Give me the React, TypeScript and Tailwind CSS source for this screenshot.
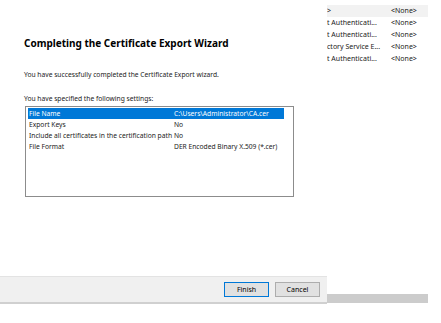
const rows = [
  ["File Name", "C:\\Users\\Administrator\\CA.cer"],
  ["Export Keys", "No"],
  ["Include all certificates in the certification path", "No"],
  ["File Format", "DER Encoded Binary X.509 (*.cer)"],
];

const sideRows = [
  ">",
  "t Authenticati...",
  "t Authenticati...",
  "ctory Service E...",
  "t Authenticati...",
];

export default function App() {
  return (
    <div
      className="relative w-[441px] h-[323px] overflow-hidden bg-white text-[#1a1a1a]"
      style={{ fontFamily: '"Noto Sans", "Open Sans", sans-serif' }}
    >
      {/* bottom of a text line cut off by the window edge */}
      <div className="absolute left-0 top-[-12px] w-[441px] text-[10px] text-black leading-[11px] flex">
        <span className="ml-[2px]">Ej ygpj yj yj ygpj ygqj</span>
        <span className="ml-[200px]">[Ij]pj ygj</span>
      </div>

      <div className="flex">
        {/* wizard panel */}
        <div className="w-[327px] flex flex-col">
          <div className="h-[276px] bg-white pl-[24px] pt-[36px]">
            <div className="text-[10px] font-bold leading-[14px] text-black">
              Completing the Certificate Export Wizard
            </div>
            <div className="mt-[20px] text-[6.7px] leading-[10px]">
              You have successfully completed the Certificate Export wizard.
            </div>
            <div className="mt-[14px] text-[6.7px] leading-[10px]">
              You have specified the following settings:
            </div>
            <div className="mt-[2px] w-[269px] h-[91px] ml-[1px] border border-[#8c8c8c] bg-white pt-[1px] pl-[2px]">
              {rows.map(([k, v], i) => (
                <div
                  key={k}
                  className={
                    i === 0
                      ? "flex w-[256px] h-[11px] items-center text-[6.7px] leading-[11px] bg-[#0078d7] text-white"
                      : "flex w-[256px] h-[11px] items-center text-[6.7px] leading-[11px]"
                  }
                >
                  <span className="w-[146px] pl-[1px] whitespace-nowrap overflow-hidden">{k}</span>
                  <span className="whitespace-nowrap">{v}</span>
                </div>
              ))}
            </div>
          </div>
          <div className="h-[28px] bg-[#f0f0f0] border-t border-[#e3e3e3] border-b-2 border-b-[#d0d0d0] flex items-center justify-end gap-[6px] pr-[7px]">
            <button className="w-[45px] h-[15px] bg-[#e1e1e1] border border-[#0078d7] text-[7px] leading-[13px] text-black">
              Finish
            </button>
            <button className="w-[45px] h-[15px] bg-[#e1e1e1] border border-[#adadad] text-[7px] leading-[13px] text-black">
              Cancel
            </button>
          </div>
        </div>

        {/* background list */}
        <div className="w-[101px] flex flex-col">
          <div className="pt-[5px]">
            {sideRows.map((t, i) => (
              <div
                key={i}
                className={
                  i === 0
                    ? "flex h-[12px] items-center text-[7px] bg-[#f2f2f2]"
                    : "flex h-[12px] items-center text-[7px]"
                }
              >
                <span className="w-[64px] whitespace-nowrap overflow-hidden">{t}</span>
                <span>&lt;None&gt;</span>
              </div>
            ))}
          </div>
          <div className="mt-auto mb-[1px] h-[9px] bg-[#cccccc]" />
        </div>
      </div>
    </div>
  );
}
